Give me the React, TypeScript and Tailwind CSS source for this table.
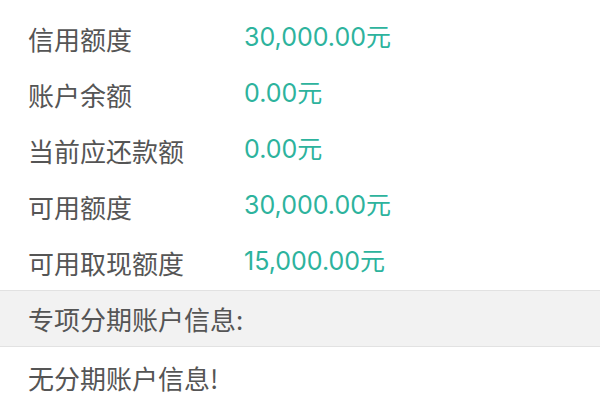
const rows = [
  { label: "信用额度", value: "30,000.00元" },
  { label: "账户余额", value: "0.00元" },
  { label: "当前应还款额", value: "0.00元" },
  { label: "可用额度", value: "30,000.00元" },
  { label: "可用取现额度", value: "15,000.00元" },
]

export default function App() {
  return (
    <div className="h-[400px] w-[600px] overflow-hidden bg-white pt-[10px] text-[26px] font-['Noto_Sans_CJK_SC',sans-serif]">
      {rows.map((row) => (
        <div key={row.label} className="flex h-[56px] items-center px-[28px]">
          <span className="w-[216px] text-[#555555]">{row.label}</span>
          <span className="text-[25px] text-[#2db39d] font-['Inter','Noto_Sans_CJK_SC',sans-serif]">{row.value}</span>
        </div>
      ))}
      <div className="flex h-[57px] items-center border-y border-[#e2e2e2] bg-[#f2f2f2] px-[28px] text-[#555555]">
        专项分期账户信息:
      </div>
      <div className="flex h-[60px] items-center px-[28px] text-[#555555]">无分期账户信息!</div>
    </div>
  )
}
